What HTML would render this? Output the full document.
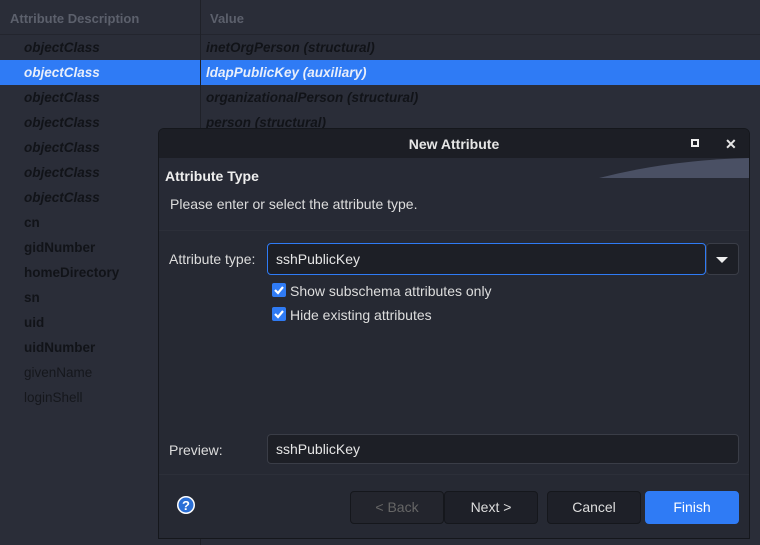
<!DOCTYPE html>
<html><head><meta charset="utf-8"><style>
*{box-sizing:border-box;margin:0;padding:0}
body{width:760px;height:545px;overflow:hidden;background:#2a2d38;font-family:"Liberation Sans",sans-serif;position:relative}
.hdr{position:absolute;left:0;top:0;width:760px;height:35px;border-bottom:1px solid #23252e;color:#5c606c;font-size:13px;font-weight:bold}
.hdr span{position:absolute;top:11px}
.vline{position:absolute;left:200px;top:0;width:1px;height:545px;background:#1f2128}
.row{position:absolute;left:0;width:760px;height:25px;font-size:13.5px;font-weight:bold;font-style:italic;color:#111318}
.row .a{position:absolute;left:24px;top:5px}
.row .v{position:absolute;left:206px;top:5px}
.sel{background:#2f7bf5;color:#e8eefa}
.plain{font-style:normal}
.light{font-style:normal;font-weight:normal;color:#15171c}
.dlg{position:absolute;left:158px;top:128px;width:592px;height:411px;background:#262933;border:1px solid #15171c;border-radius:6px 6px 0 0;overflow:hidden}
.title{height:29px;background:#1c1e25;color:#e6e6e6;font-size:14px;font-weight:bold;text-align:center;line-height:30px;position:relative}
.top{height:73px;background:#272a35;position:relative;border-bottom:1px solid #2c2f39}
.t1{position:absolute;left:6px;top:10px;color:#eee;font-size:14px;font-weight:bold}
.t2{position:absolute;left:11px;top:38px;color:#ddd;font-size:14px}
.lbl{position:absolute;color:#ddd;font-size:14px}
.inp{position:absolute;background:#1d1f26;border:1px solid #3a3d47;border-radius:4px;color:#e6e6e6;font-size:14px;padding-left:8px}
.cb{position:absolute;width:14px;height:14px;background:#2f7bf5;border-radius:2px}
.btn{position:absolute;top:362px;height:33px;border:1px solid #15171c;border-radius:4px;background:#1e2028;color:#ddd;font-size:14px;text-align:center;line-height:31px}
</style></head><body>
<div class="hdr"><span style="left:10px">Attribute Description</span><span style="left:210px">Value</span></div>
<div class="row" style="top:35px"><span class="a">objectClass</span><span class="v">inetOrgPerson (structural)</span></div>
<div class="row sel" style="top:60px"><span class="a">objectClass</span><span class="v">ldapPublicKey (auxiliary)</span></div>
<div class="row" style="top:85px"><span class="a">objectClass</span><span class="v">organizationalPerson (structural)</span></div>
<div class="row" style="top:110px"><span class="a">objectClass</span><span class="v">person (structural)</span></div>
<div class="row" style="top:135px"><span class="a">objectClass</span></div>
<div class="row" style="top:160px"><span class="a">objectClass</span></div>
<div class="row" style="top:185px"><span class="a">objectClass</span></div>
<div class="row plain" style="top:210px"><span class="a">cn</span></div>
<div class="row plain" style="top:235px"><span class="a">gidNumber</span></div>
<div class="row plain" style="top:260px"><span class="a">homeDirectory</span></div>
<div class="row plain" style="top:285px"><span class="a">sn</span></div>
<div class="row plain" style="top:310px"><span class="a">uid</span></div>
<div class="row plain" style="top:335px"><span class="a">uidNumber</span></div>
<div class="row light" style="top:360px"><span class="a">givenName</span></div>
<div class="row light" style="top:385px"><span class="a">loginShell</span></div>
<div class="vline"></div>
<div class="dlg">
<div class="title">New Attribute
<span style="position:absolute;left:532px;top:10px;width:8px;height:8px;border:2px solid #eee"></span>
<span style="position:absolute;left:566px;top:0;font-size:14px">✕</span></div>
<div class="top"><div class="t1">Attribute Type</div><div class="t2">Please enter or select the attribute type.</div>
<svg style="position:absolute;right:0;top:0" width="150" height="20"><path d="M0 20 Q70 2 150 0 L150 20 Z" fill="#4a5064"/></svg></div>
<div class="lbl" style="left:10px;top:122px">Attribute type:</div>
<div class="inp" style="left:108px;top:114px;width:439px;height:32px;line-height:30px;border-color:#2f7bf5">sshPublicKey</div>
<div class="inp" style="left:547px;top:114px;width:33px;height:32px;padding:0"><svg width="31" height="30"><path d="M9 13 L21 13 L15 19Z" fill="#eee"/></svg></div>
<div class="cb" style="left:113px;top:154px"><svg width="14" height="14"><path d="M3 7 L6 10 L11 4" stroke="#fff" stroke-width="2.2" fill="none"/></svg></div>
<div class="lbl" style="left:131px;top:154px">Show subschema attributes only</div>
<div class="cb" style="left:113px;top:178px"><svg width="14" height="14"><path d="M3 7 L6 10 L11 4" stroke="#fff" stroke-width="2.2" fill="none"/></svg></div>
<div class="lbl" style="left:131px;top:178px">Hide existing attributes</div>
<div class="lbl" style="left:10px;top:313px">Preview:</div>
<div class="inp" style="left:108px;top:305px;width:472px;height:30px;line-height:28px">sshPublicKey</div>
<div style="position:absolute;left:0;top:345px;width:592px;height:1px;background:#2c2f39"></div>
<svg style="position:absolute;left:17px;top:366px" width="20" height="20"><circle cx="10" cy="10" r="9" fill="#fff"/><circle cx="10" cy="10" r="7.5" fill="#2b6fd6"/><text x="10" y="15" font-size="13" font-weight="bold" fill="#fff" text-anchor="middle" font-family="Liberation Sans">?</text></svg>
<div class="btn" style="left:191px;width:94px;color:#666;background:#23252d">&lt; Back</div>
<div class="btn" style="left:285px;width:94px">Next &gt;</div>
<div class="btn" style="left:388px;width:94px">Cancel</div>
<div class="btn" style="left:486px;width:94px;background:#2f7bf5;border-color:#2f7bf5;color:#fff">Finish</div>
</div>
</body></html>
